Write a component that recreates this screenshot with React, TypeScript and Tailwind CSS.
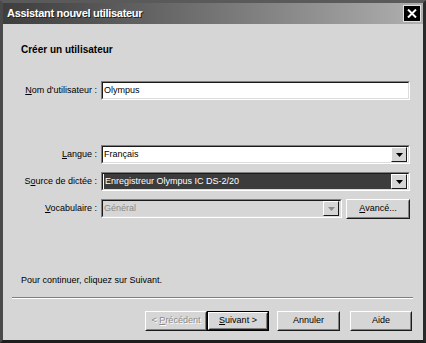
import React from 'react';

const font = { fontFamily: '"Liberation Sans", Arial, sans-serif' };

// Champ creusé (style Windows classique)
const Sunken: React.FC<{ className?: string; children?: React.ReactNode; inner?: string }> = ({ className = '', children, inner = 'bg-white' }) => (
  <div className={`border border-t-[#808080] border-l-[#808080] border-b-white border-r-white ${className}`}>
    <div className={`h-full border border-t-[#1a1a1a] border-l-[#1a1a1a] border-b-[#dcdcdc] border-r-[#dcdcdc] flex items-center ${inner}`}>
      {children}
    </div>
  </div>
);

const ArrowBtn: React.FC<{ disabled?: boolean }> = ({ disabled }) => (
  <div className="ml-auto mr-[1px] w-[16px] h-[15px] bg-[#d6d6d6] border border-t-white border-l-white border-b-[#1a1a1a] border-r-[#1a1a1a] flex items-center justify-center">
    <svg width="7" height="4" viewBox="0 0 7 4">
      <path d="M0 0h7L3.5 4z" fill={disabled ? '#8a8a8a' : '#000'} />
    </svg>
  </div>
);

const Button: React.FC<{ children: React.ReactNode; className?: string; def?: boolean }> = ({ children, className = '', def }) => (
  <div className={`h-[20px] ${def ? 'border border-black' : ''} ${className}`}>
    <div className="h-full border border-t-white border-l-white border-b-[#1a1a1a] border-r-[#1a1a1a] bg-[#d6d6d6]">
      <div className="h-full border border-transparent border-b-[#808080] border-r-[#808080] flex items-center justify-center text-[9px] text-black">
        {children}
      </div>
    </div>
  </div>
);

const Row: React.FC<{ label: React.ReactNode; children: React.ReactNode; className?: string }> = ({ label, children, className = '' }) => (
  <div className={`flex items-center h-[19px] ${className}`}>
    <div className="w-[94px] text-right text-[9px] text-black whitespace-nowrap">{label}</div>
    <div className="ml-[4px] flex items-center">{children}</div>
  </div>
);

export default function App() {
  return (
    <div style={font} className="w-[426px] h-[343px] bg-[#d6d6d6] border-[3px] border-t-[#5a5a5a] border-l-[#4a4a4a] border-b-[#1e1e1e] border-r-[#2a2a2a] flex flex-col overflow-hidden">
      {/* Barre de titre */}
      <div className="h-[21px] shrink-0 bg-gradient-to-r from-[#3e3e3e] via-[#747474] to-[#b0b0b0] flex items-center pl-[4px] pr-[2px]">
        <span className="text-white font-bold text-[11px] tracking-[-0.3px] [text-shadow:1px_1px_0_#222]">
          Assistant nouvel utilisateur
        </span>
        <div className="ml-auto w-[18px] h-[17px] bg-black border border-[#e0e0e0] flex items-center justify-center">
          <svg width="10" height="9" viewBox="0 0 10 9">
            <path d="M1 0.5L9 8.5M9 0.5L1 8.5" stroke="#fff" strokeWidth="2" />
          </svg>
        </div>
      </div>

      {/* Contenu */}
      <div className="flex flex-col flex-1">
        <div className="mt-[19px] ml-[18px] h-[13px] text-[10px] font-bold text-black leading-[13px]">Créer un utilisateur</div>

        <Row className="mt-[25px]" label={<><u>N</u>om d'utilisateur :</>}>
          <Sunken className="w-[309px] h-[19px]">
            <span className="pl-[1px] text-[9px] text-black">Olympus</span>
          </Sunken>
        </Row>

        <Row className="mt-[45px]" label={<><u>L</u>angue :</>}>
          <Sunken className="w-[309px] h-[19px]">
            <span className="pl-[1px] text-[9px] text-black">Français</span>
            <ArrowBtn />
          </Sunken>
        </Row>

        <Row className="mt-[8px]" label={<>S<u>o</u>urce de dictée :</>}>
          <Sunken className="w-[309px] h-[19px]">
            <div className="flex-1 h-[15px] ml-[1px] bg-[#3c3c3c] flex items-center">
              <span className="pl-[1px] text-[9px] text-white">Enregistreur Olympus IC DS-2/20</span>
            </div>
            <ArrowBtn />
          </Sunken>
        </Row>

        <Row className="mt-[8px]" label={<><u>V</u>ocabulaire :</>}>
          <Sunken className="w-[241px] h-[19px]" inner="bg-[#d6d6d6]">
            <span className="pl-[1px] text-[9px] text-[#8a8a8a]">Général</span>
            <ArrowBtn disabled />
          </Sunken>
          <Button className="ml-[4px] w-[64px]">
            <span><u>A</u>vancé...</span>
          </Button>
        </Row>

        <div className="mt-[56px] ml-[18px] text-[9px] text-black leading-[12px]">Pour continuer, cliquez sur Suivant.</div>

        <div className="mt-[11px] ml-[9px] mr-[10px] border-t border-t-[#808080] border-b border-b-white" />

        <div className="mt-[12px] flex justify-end pr-[11px]">
          <Button className="w-[62px]">
            <span className="text-[#8a8a8a] [text-shadow:1px_1px_0_#fff]">&lt; <u>P</u>récédent</span>
          </Button>
          <Button def className="w-[62px]">
            <span><u>S</u>uivant &gt;</span>
          </Button>
          <Button className="ml-[8px] w-[63px]">Annuler</Button>
          <Button className="ml-[10px] w-[62px]">Aide</Button>
        </div>
      </div>
    </div>
  );
}
